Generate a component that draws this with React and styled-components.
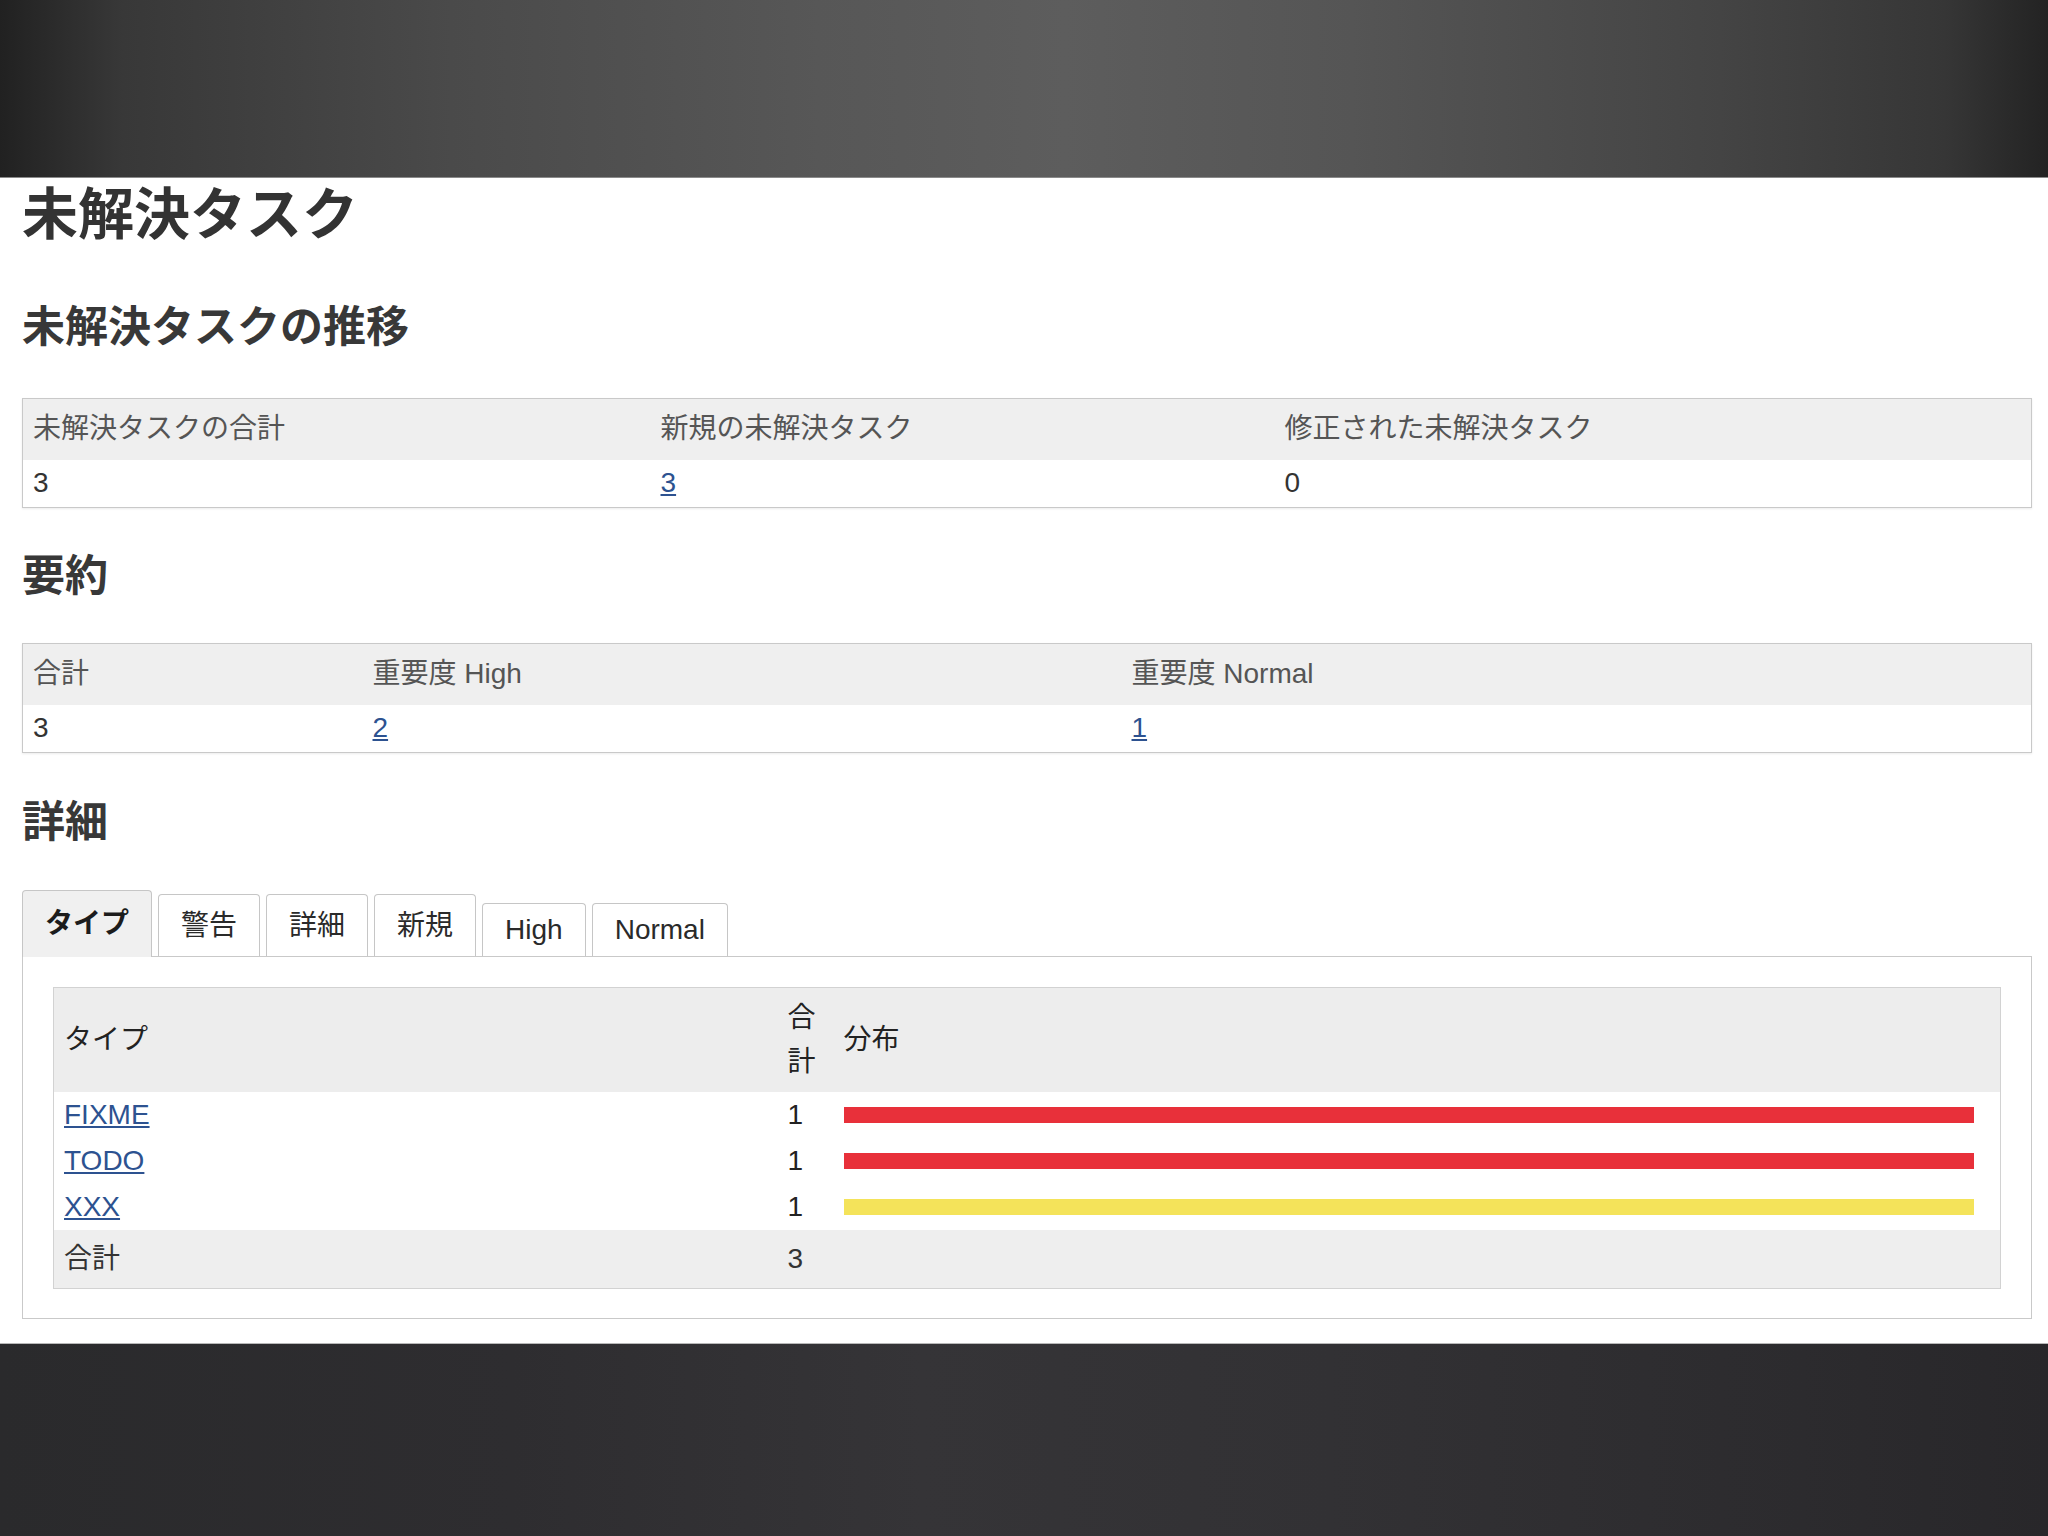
import React from "react";
import styled, { createGlobalStyle } from "styled-components";

const GlobalStyle = createGlobalStyle`
  *, *::before, *::after { box-sizing: border-box; }
  html, body { margin: 0; padding: 0; background: #fff; }
  body {
    font-family: "Liberation Sans", "Noto Sans CJK JP", sans-serif;
    color: #333;
  }
`;

const Page = styled.div`
  display: flex;
  flex-direction: column;
  width: 2048px;
  height: 1536px;
  overflow: hidden;
`;

const TopBand = styled.div`
  flex: 0 0 178px;
  background: linear-gradient(
    90deg,
    #212121 0%,
    #383838 6%,
    #4a4a4a 22%,
    #575757 40%,
    #5d5d5d 52%,
    #555555 66%,
    #444444 84%,
    #363636 95%,
    #232323 100%
  );
  border-bottom: 1px solid #8a8a8a;
`;

const BottomBand = styled.div`
  flex: 0 0 193px;
  background: linear-gradient(
    90deg,
    #2a2a2c 0%,
    #2e2d30 25%,
    #353437 45%,
    #323134 65%,
    #2c2b2e 88%,
    #28272a 100%
  );
  border-top: 1px solid #b8b8b8;
`;

const Content = styled.main`
  flex: 1;
  background: #fff;
  padding: 3px 16px 0 22px;
`;

const Title = styled.h1`
  margin: 0;
  font-size: 56px;
  line-height: 67px;
  font-weight: bold;
  color: #333;
`;

const SectionTitle = styled.h2`
  margin: ${(p) => p.$top}px 0 0;
  font-size: 43px;
  line-height: 52px;
  font-weight: bold;
  color: #383838;
`;

const DataTable = styled.table`
  width: 100%;
  margin-top: ${(p) => p.$top}px;
  border-collapse: collapse;
  table-layout: fixed;
  border: 1px solid #c9c9c9;
  box-shadow: 0 1px 2px rgba(0, 0, 0, 0.08);
  font-size: 28px;
`;

const HeadCell = styled.th`
  width: ${(p) => (p.$w ? `${p.$w}px` : "auto")};
  padding: 11px 10px 12px;
  line-height: 38px;
  text-align: left;
  font-weight: normal;
  color: #555;
  background: #efefef;
`;

const Cell = styled.td`
  padding: 4px 10px 5px;
  line-height: 38px;
  color: #333;
  background: #fff;
`;

const Link = styled.a`
  color: #2d5290;
  text-decoration: underline;
  cursor: pointer;
`;

const TabBar = styled.div`
  display: flex;
  align-items: flex-end;
  gap: 6px;
  margin-top: 42px;
`;

const Tab = styled.div`
  position: relative;
  z-index: ${(p) => (p.$active ? 1 : 0)};
  display: flex;
  align-items: center;
  height: ${(p) => p.$h + (p.$active ? 1 : 0)}px;
  margin-bottom: ${(p) => (p.$active ? -1 : 0)}px;
  padding: 0 22px ${(p) => p.$pb ?? 0}px;
  border: 1px solid #c6c6c6;
  border-bottom: none;
  border-radius: 4px 4px 0 0;
  background: ${(p) => (p.$active ? "#f0f0f0" : "#fff")};
  font-size: 28px;
  font-weight: ${(p) => (p.$active ? "bold" : "normal")};
  color: ${(p) => (p.$active ? "#1c1c1c" : "#2a2a2a")};
`;

const Panel = styled.div`
  border: 1px solid #c9c9c9;
  padding: 30px 30px 29px;
  background: #fff;
`;

const TypeTable = styled.table`
  width: 100%;
  border-collapse: collapse;
  table-layout: fixed;
  border: 1px solid #d2d2d2;
  font-size: 28px;
`;

const TypeHead = styled.th`
  width: ${(p) => (p.$w ? `${p.$w}px` : "auto")};
  padding: 8px ${(p) => p.$pr ?? 10}px 8px ${(p) => p.$pl ?? 10}px;
  line-height: 44px;
  text-align: left;
  vertical-align: middle;
  font-weight: normal;
  color: #222;
  background: #ededed;
`;

const TypeCell = styled.td`
  padding: 4px ${(p) => p.$pr ?? 10}px 4px ${(p) => p.$pl ?? 10}px;
  line-height: 38px;
  vertical-align: middle;
  color: #222;
  background: #fff;
`;

const TotalCell = styled.td`
  padding: 10px ${(p) => p.$pr ?? 10}px 10px ${(p) => p.$pl ?? 10}px;
  line-height: 38px;
  color: #333;
  background: #eeeeee;
`;

const Bar = styled.div`
  height: 16px;
  background: ${(p) => p.$color};
`;

const trend = [
  { label: "未解決タスクの合計", value: "3", w: 628 },
  { label: "新規の未解決タスク", value: "3", link: true, w: 624 },
  { label: "修正された未解決タスク", value: "0" },
];

const summary = [
  { label: "合計", value: "3", w: 340 },
  { label: "重要度 High", value: "2", link: true, w: 759 },
  { label: "重要度 Normal", value: "1", link: true },
];

const tabs = [
  { label: "タイプ", h: 66, pb: 6, active: true },
  { label: "警告", h: 62, pb: 6 },
  { label: "詳細", h: 62, pb: 6 },
  { label: "新規", h: 62, pb: 6 },
  { label: "High", h: 53 },
  { label: "Normal", h: 53 },
];

const types = [
  { name: "FIXME", count: 1, color: "#e8303a" },
  { name: "TODO", count: 1, color: "#e8303a" },
  { name: "XXX", count: 1, color: "#f4e35a" },
];

const SummaryTable = ({ cols, top }) => (
  <DataTable $top={top}>
    <thead>
      <tr>
        {cols.map((c) => (
          <HeadCell key={c.label} $w={c.w}>
            {c.label}
          </HeadCell>
        ))}
      </tr>
    </thead>
    <tbody>
      <tr>
        {cols.map((c) => (
          <Cell key={c.label}>
            {c.link ? <Link>{c.value}</Link> : c.value}
          </Cell>
        ))}
      </tr>
    </tbody>
  </DataTable>
);

const App = () => {
  const max = Math.max(...types.map((t) => t.count));
  const total = types.reduce((s, t) => s + t.count, 0);

  return (
    <>
      <GlobalStyle />
      <Page>
        <TopBand />
        <Content>
          <Title>未解決タスク</Title>

          <SectionTitle $top={53}>未解決タスクの推移</SectionTitle>
          <SummaryTable cols={trend} top={45} />

          <SectionTitle $top={42}>要約</SectionTitle>
          <SummaryTable cols={summary} top={41} />

          <SectionTitle $top={43}>詳細</SectionTitle>
          <TabBar>
            {tabs.map((t) => (
              <Tab key={t.label} $h={t.h} $pb={t.pb} $active={t.active}>
                {t.label}
              </Tab>
            ))}
          </TabBar>
          <Panel>
            <TypeTable>
              <thead>
                <tr>
                  <TypeHead $w={729}>タイプ</TypeHead>
                  <TypeHead $w={55} $pl={5} $pr={5}>
                    合計
                  </TypeHead>
                  <TypeHead $pl={6}>分布</TypeHead>
                </tr>
              </thead>
              <tbody>
                {types.map((t) => (
                  <tr key={t.name}>
                    <TypeCell>
                      <Link>{t.name}</Link>
                    </TypeCell>
                    <TypeCell $pl={5} $pr={5}>
                      {t.count}
                    </TypeCell>
                    <TypeCell $pl={6} $pr={26}>
                      <Bar
                        $color={t.color}
                        style={{ width: `${(t.count / max) * 100}%` }}
                      />
                    </TypeCell>
                  </tr>
                ))}
              </tbody>
              <tfoot>
                <tr>
                  <TotalCell>合計</TotalCell>
                  <TotalCell $pl={5} $pr={5}>
                    {total}
                  </TotalCell>
                  <TotalCell />
                </tr>
              </tfoot>
            </TypeTable>
          </Panel>
        </Content>
        <BottomBand />
      </Page>
    </>
  );
};

export default App;
